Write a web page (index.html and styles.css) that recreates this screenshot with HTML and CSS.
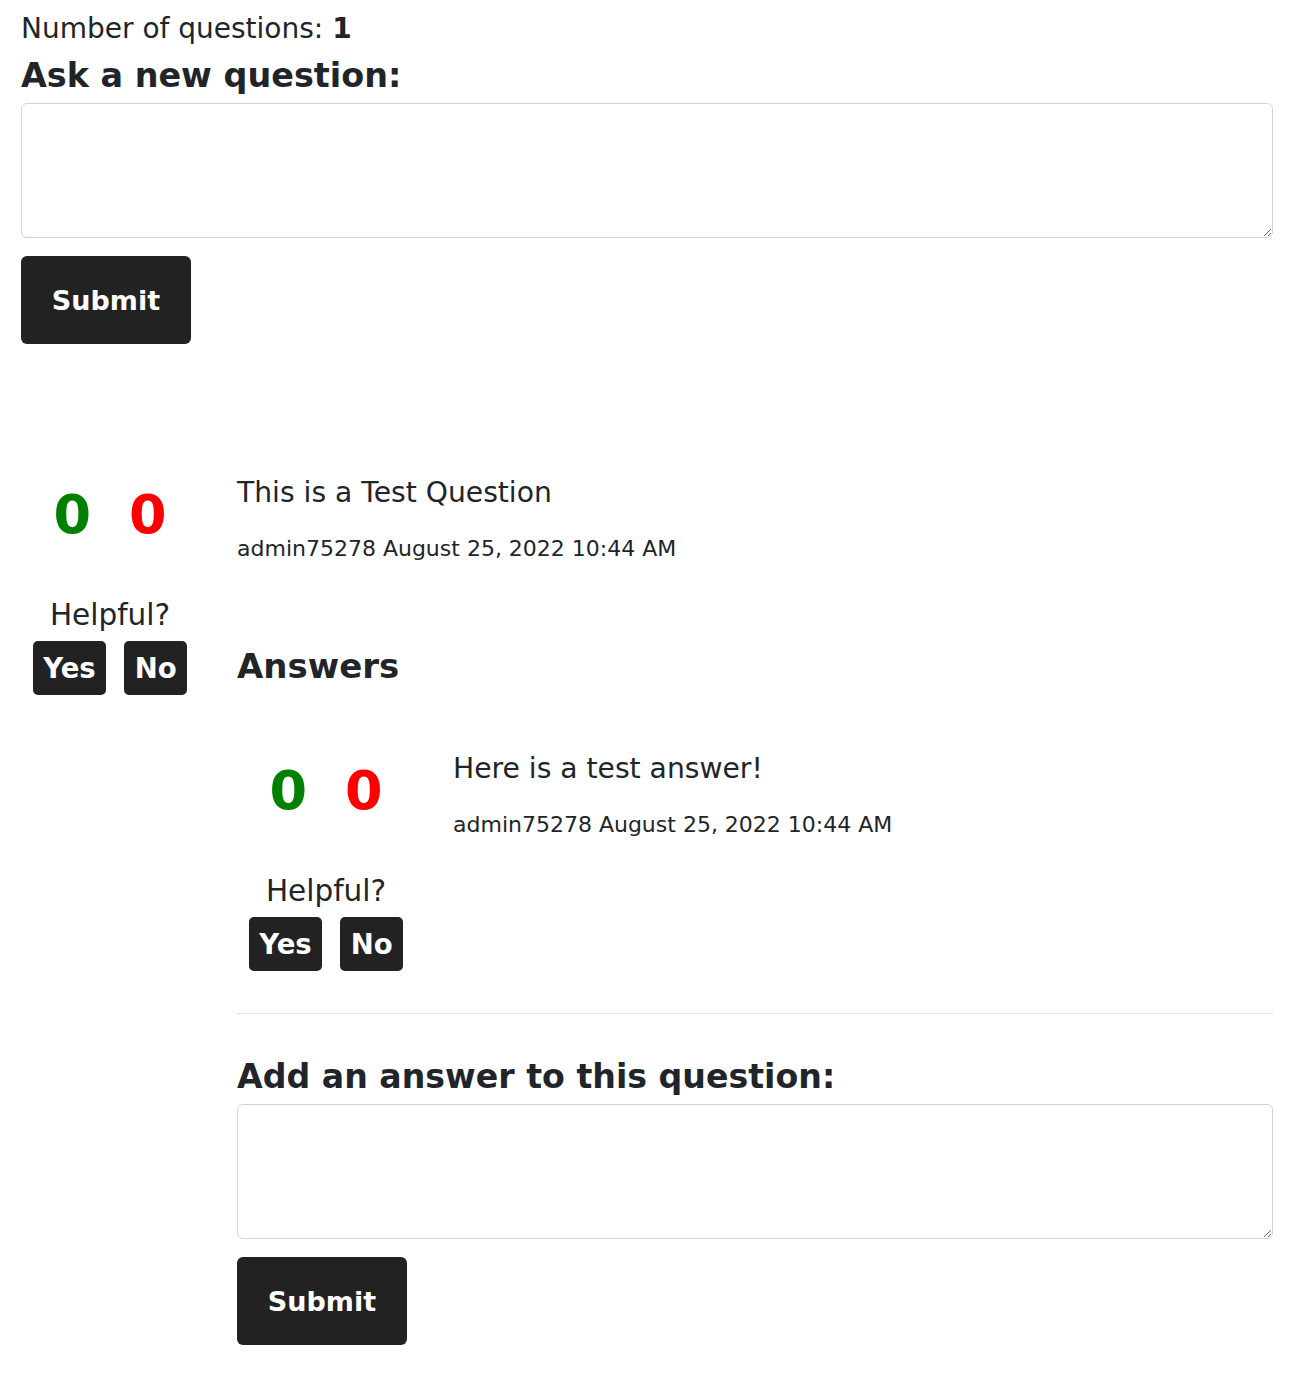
FILE: index.html
```html
<!DOCTYPE html>
<html lang="en">
<head>
<meta charset="utf-8">
<title>Questions</title>
<link rel="stylesheet" href="styles.css">
</head>
<body>
<main class="page">
  <p class="count">Number of questions: <strong>1</strong></p>
  <h2 class="heading">Ask a new question:</h2>
  <form class="ask-form">
    <textarea class="field"></textarea>
    <button type="button" class="submit">Submit</button>
  </form>

  <section class="post question">
    <div class="side">
      <div class="votes"><span class="up">0</span><span class="down">0</span></div>
      <p class="helpful">Helpful?</p>
      <div class="choices"><button type="button" class="choice">Yes</button><button type="button" class="choice">No</button></div>
    </div>
    <div class="body">
      <p class="text">This is a Test Question</p>
      <p class="meta">admin75278 August 25, 2022 10:44 AM</p>
      <h3 class="answers-title">Answers</h3>
      <div class="post answer">
        <div class="side">
          <div class="votes"><span class="up">0</span><span class="down">0</span></div>
          <p class="helpful">Helpful?</p>
          <div class="choices"><button type="button" class="choice">Yes</button><button type="button" class="choice">No</button></div>
        </div>
        <div class="body">
          <p class="text">Here is a test answer!</p>
          <p class="meta">admin75278 August 25, 2022 10:44 AM</p>
        </div>
      </div>
      <hr class="rule">
      <h2 class="heading add-heading">Add an answer to this question:</h2>
      <form class="ask-form">
        <textarea class="field"></textarea>
        <button type="button" class="submit">Submit</button>
      </form>
    </div>
  </section>
</main>
</body>
</html>
```

FILE: styles.css
```css
* { box-sizing: border-box; }
html, body { margin: 0; padding: 0; background: #fff; }
body {
  font-family: "DejaVu Sans", "Noto Sans", sans-serif;
  color: #212529;
}
.page { padding: 0 24px 48px 21px; }
p { margin: 0; }

.count {
  margin-top: 12px;
  font-size: 28px;
  line-height: 34px;
  height: 34px;
}
.count strong { font-weight: 700; }

.heading {
  margin: 9px 0 0;
  font-size: 33.4px;
  line-height: 41px;
  height: 41px;
  font-weight: 700;
  white-space: nowrap;
}

.ask-form { display: flex; flex-direction: column; align-items: flex-start; }
.field {
  display: block;
  width: 100%;
  height: 135px;
  margin-top: 7px;
  border: 1px solid #ced4da;
  border-radius: 6px;
  padding: 6px 12px;
  font: inherit;
  resize: vertical;
}
.submit {
  margin-top: 18px;
  width: 170px;
  height: 88px;
  border: 0;
  border-radius: 6px;
  background: #222;
  color: #fff;
  font-family: inherit;
  font-size: 27px;
  font-weight: 700;
  cursor: pointer;
}

.post {
  display: grid;
  grid-template-columns: 178px 1fr;
  column-gap: 38px;
  align-items: start;
}
.question { margin-top: 131px; }
.answer { margin-top: 64px; }

.side { display: flex; flex-direction: column; align-items: center; }
.votes {
  margin-top: 10px;
  display: flex;
  gap: 38px;
  font-size: 54px;
  line-height: 60px;
  font-weight: 700;
}
.up { color: #008000; }
.down { color: #ff0000; }
.helpful {
  margin-top: 53px;
  font-size: 29.5px;
  line-height: 34px;
}
.choices { margin-top: 9px; display: flex; gap: 18px; }
.choice {
  height: 54px;
  padding: 0 10.5px 0 10.5px;
  border: 0;
  border-radius: 5px;
  background: #222;
  color: #fff;
  font-family: inherit;
  font-size: 27.5px;
  font-weight: 700;
  cursor: pointer;
}

.text { padding-top: 1px; font-size: 28.2px; line-height: 34px; }
.meta { margin-top: 26px; font-size: 22px; line-height: 26px; }
.answers-title {
  margin: 84px 0 0;
  font-size: 34px;
  line-height: 41px;
  font-weight: 700;
}

.rule {
  margin: 42px 0 0;
  border: 0;
  border-top: 1px solid #dee2e6;
  height: 0;
}
.add-heading { margin-top: 42px; font-size: 33.2px; }
```
